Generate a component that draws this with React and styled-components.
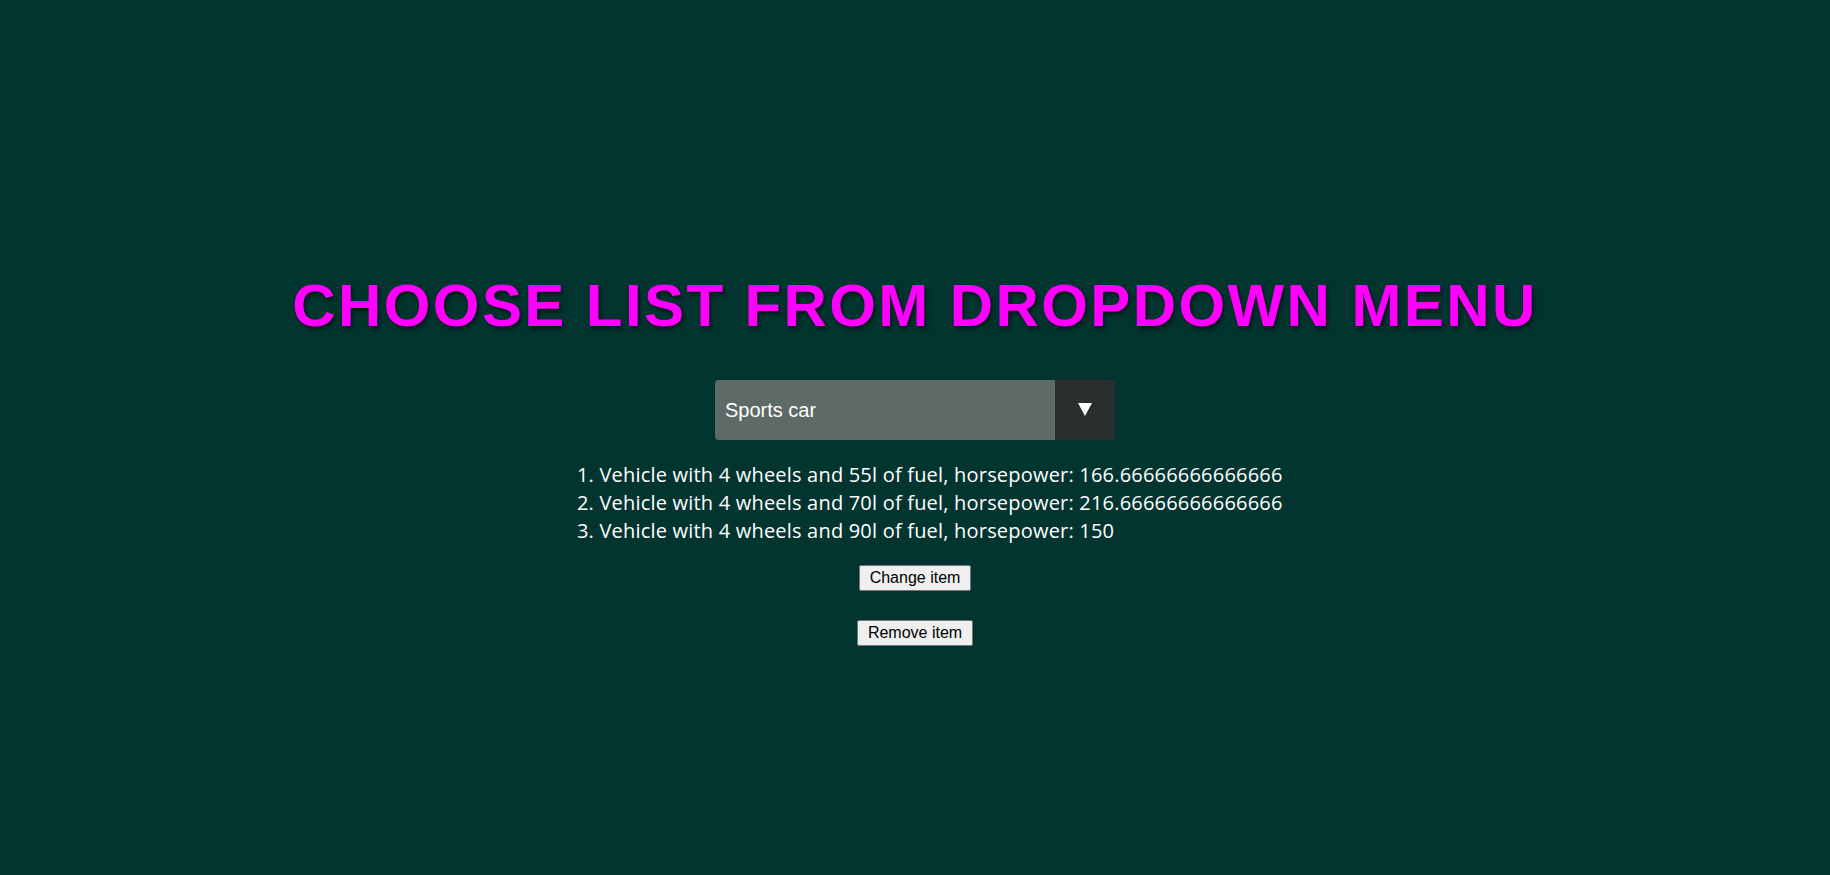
import React, { useState } from 'react';
import styled, { createGlobalStyle } from 'styled-components';

const GlobalStyle = createGlobalStyle`
  html, body {
    margin: 0;
    padding: 0;
    background-color: #023530;
  }
`;

const Page = styled.div`
  min-height: 100vh;
  box-sizing: border-box;
  padding-top: 41px;
  display: flex;
  flex-direction: column;
  align-items: center;
  justify-content: center;
  background-color: #023530;
`;

const Title = styled.h1`
  margin: 0 0 40px;
  font-family: 'Liberation Sans', Arial, sans-serif;
  font-size: 60px;
  font-weight: 700;
  letter-spacing: 2.4px;
  color: #ff00ff;
  text-transform: uppercase;
  text-shadow: 2px 3px 4px rgba(0, 0, 0, 0.55);
`;

const SelectBox = styled.div`
  display: flex;
  width: 400px;
  height: 60px;
  border-radius: 4px;
  overflow: hidden;
`;

const Select = styled.select`
  flex: 1;
  appearance: none;
  border: none;
  outline: none;
  padding: 0 10px;
  background-color: #5f6966;
  color: #fff;
  font-family: 'Liberation Sans', Arial, sans-serif;
  font-size: 20px;
  cursor: pointer;
`;

const Arrow = styled.div`
  width: 60px;
  display: flex;
  align-items: center;
  justify-content: center;
  background-color: #2b2e2f;
  pointer-events: none;
`;

const List = styled.ol`
  margin: 21px 0 20px;
  padding-left: 52px;
  font-family: 'Comic Sans MS', 'Open Sans', sans-serif;
  font-size: 20px;
  line-height: 28px;
  letter-spacing: 0.2px;
  color: #fff;
`;

const Button = styled.button`
  margin-bottom: ${({ gap }) => gap || 0}px;
  padding: 3px 10px;
  background-color: #efefef;
  border: 1px solid #767676;
  border-radius: 2px;
  font-family: 'Liberation Sans', Arial, sans-serif;
  font-size: 16px;
  color: #000;
  cursor: pointer;
`;

const lists = {
  'Sports car': [
    { wheels: 4, fuel: 55, horsepower: 166.66666666666666 },
    { wheels: 4, fuel: 70, horsepower: 216.66666666666666 },
    { wheels: 4, fuel: 90, horsepower: 150 },
  ],
  Truck: [
    { wheels: 6, fuel: 200, horsepower: 400 },
    { wheels: 8, fuel: 300, horsepower: 500 },
  ],
  Motorcycle: [{ wheels: 2, fuel: 15, horsepower: 80 }],
};

function App() {
  const [choice, setChoice] = useState('Sports car');
  const [items, setItems] = useState(lists);

  const current = items[choice];

  const changeItem = () => {
    const next = current.map((v, i) =>
      i === 0 ? { ...v, fuel: v.fuel + 5 } : v
    );
    setItems({ ...items, [choice]: next });
  };

  const removeItem = () => {
    setItems({ ...items, [choice]: current.slice(0, -1) });
  };

  return (
    <>
      <GlobalStyle />
      <Page>
        <Title>Choose list from dropdown menu</Title>
        <SelectBox>
          <Select value={choice} onChange={(e) => setChoice(e.target.value)}>
            {Object.keys(lists).map((name) => (
              <option key={name} value={name}>
                {name}
              </option>
            ))}
          </Select>
          <Arrow>
            <svg width="14" height="13" viewBox="0 0 14 13">
              <polygon points="0,0 14,0 7,13" fill="#fff" />
            </svg>
          </Arrow>
        </SelectBox>
        <List>
          {current.map((v, i) => (
            <li key={i}>
              Vehicle with {v.wheels} wheels and {v.fuel}l of fuel, horsepower: {v.horsepower}
            </li>
          ))}
        </List>
        <Button gap={29} onClick={changeItem}>
          Change item
        </Button>
        <Button onClick={removeItem}>Remove item</Button>
      </Page>
    </>
  );
}

export default App;
